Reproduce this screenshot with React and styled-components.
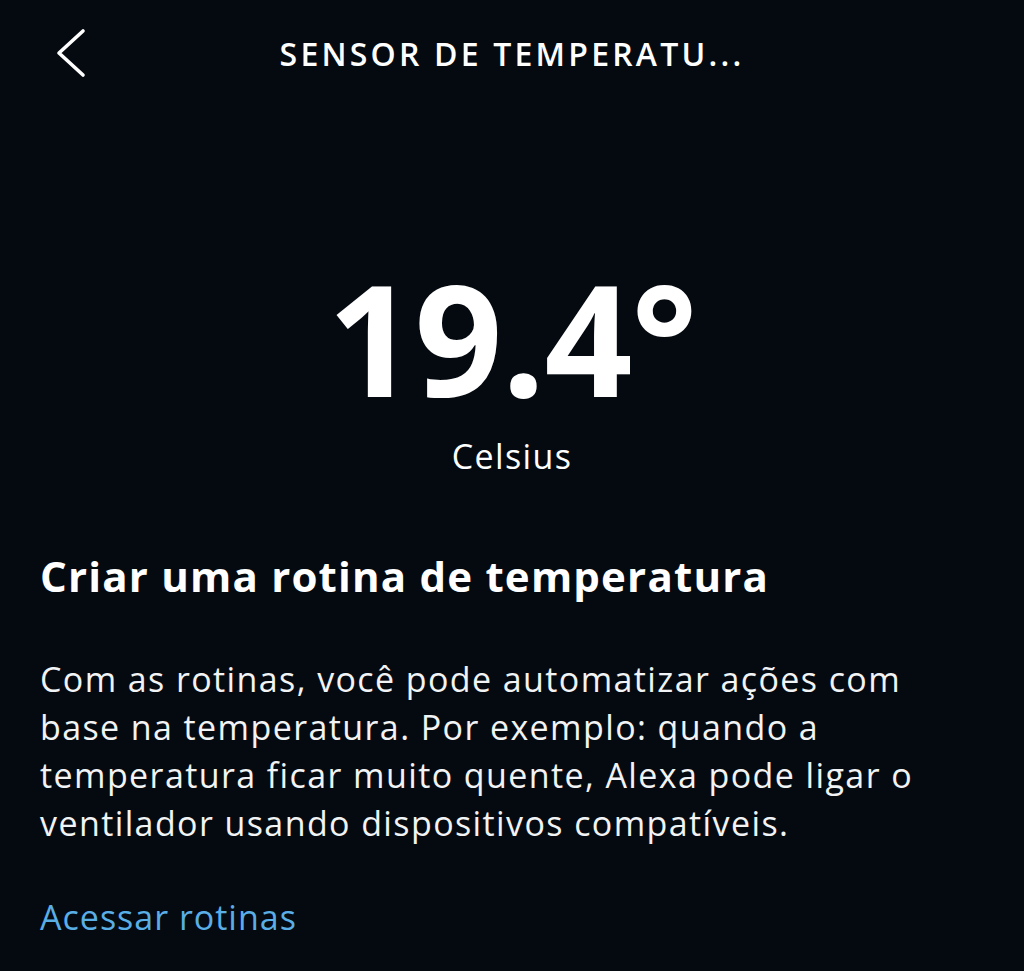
import styled, { createGlobalStyle } from "styled-components"

const Global = createGlobalStyle`
  html, body {
    margin: 0;
    padding: 0;
    background: #050a11;
  }
  * { box-sizing: border-box; }
`

const Screen = styled.div`
  min-height: 971px;
  background: #050a11;
  color: #fff;
  font-family: "Open Sans", "Noto Sans", sans-serif;
  display: flex;
  flex-direction: column;
`

const Header = styled.header`
  height: 106px;
  display: grid;
  grid-template-columns: 120px 1fr 120px;
  align-items: center;
`

const Back = styled.button`
  background: none;
  border: none;
  padding: 0 0 0 54px;
  display: flex;
  align-items: center;
  cursor: pointer;
`

const Title = styled.h1`
  margin: 0;
  text-align: center;
  font-size: 32px;
  font-weight: 600;
  letter-spacing: 3.2px;
  text-transform: uppercase;
`

const Reading = styled.section`
  display: flex;
  flex-direction: column;
  align-items: center;
  padding-top: 147px;
`

const Value = styled.div`
  font-size: 154px;
  font-weight: 700;
  line-height: 1.1;
  letter-spacing: -1px;
`

const Unit = styled.div`
  margin-top: 14px;
  font-size: 34px;
  line-height: 1.2;
  letter-spacing: 1.4px;
`

const Body = styled.section`
  padding: 74px 40px 0;
`

const Heading = styled.h2`
  margin: 0;
  font-size: 42px;
  font-weight: 700;
  line-height: 1.2;
  letter-spacing: 1.2px;
`

const Paragraph = styled.p`
  margin: 53px 0 0;
  max-width: 905px;
  font-size: 34px;
  line-height: 48px;
  letter-spacing: 1.4px;
  color: #f2f3f4;
`

const Link = styled.a`
  display: inline-block;
  margin-top: 46px;
  font-size: 34px;
  line-height: 48px;
  letter-spacing: 1px;
  color: #5aaee6;
  text-decoration: none;
`

export default function App() {
  return (
    <>
      <Global />
      <Screen>
        <Header>
          <Back aria-label="Voltar">
            <svg width="34" height="50" viewBox="0 0 34 50" fill="none">
              <path d="M29 3 L5 25 L29 47" stroke="#fff" strokeWidth="3.6" strokeLinecap="round" strokeLinejoin="round" />
            </svg>
          </Back>
          <Title>Sensor de Temperatu...</Title>
          <div />
        </Header>
        <Reading>
          <Value>19.4°</Value>
          <Unit>Celsius</Unit>
        </Reading>
        <Body>
          <Heading>Criar uma rotina de temperatura</Heading>
          <Paragraph>
            Com as rotinas, você pode automatizar ações com base na temperatura. Por exemplo: quando a temperatura ficar muito quente, Alexa pode ligar o ventilador usando dispositivos compatíveis.
          </Paragraph>
          <Link href="#">Acessar rotinas</Link>
        </Body>
      </Screen>
    </>
  )
}
